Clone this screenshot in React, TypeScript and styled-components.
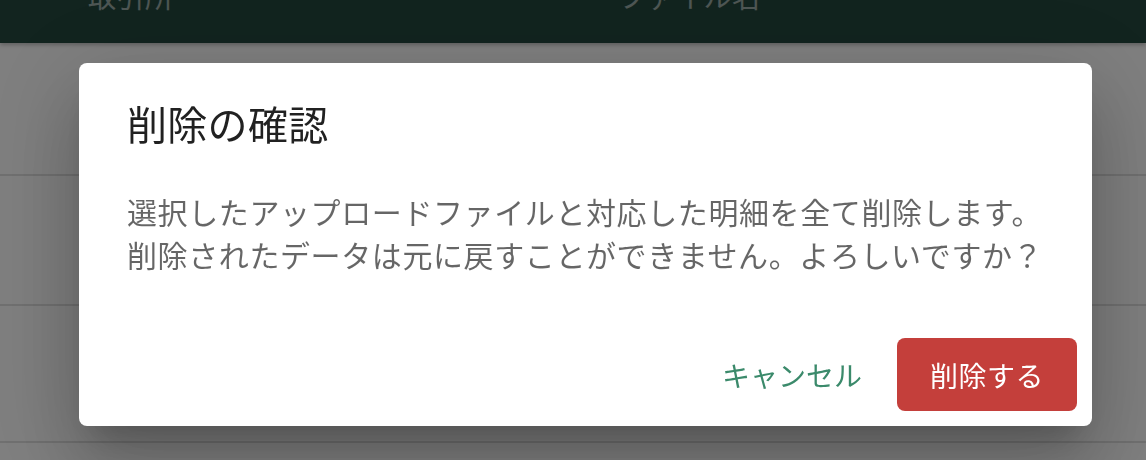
import React from 'react';
import styled, { createGlobalStyle } from 'styled-components';

const GlobalStyle = createGlobalStyle`
  html, body {
    margin: 0;
    padding: 0;
    width: 1146px;
    height: 460px;
    overflow: hidden;
    background: #ffffff;
    font-family: 'Noto Sans CJK JP', 'Noto Sans', sans-serif;
  }
`;

const Page = styled.div`
  width: 1146px;
  height: 460px;
  overflow: hidden;
  background: #ffffff;
`;

const TableHeader = styled.div`
  display: flex;
  height: 43px;
  padding-left: 88px;
  background: #24483e;
  overflow: hidden;
  box-shadow: 0 2px 4px rgba(0, 0, 0, 0.25);
  position: relative;
`;

const HeaderCell = styled.div<{ width: number }>`
  flex: 0 0 ${(p) => p.width}px;
  margin-top: -18px;
  font-size: 28px;
  line-height: 28px;
  color: #ffffff;
  opacity: 0.55;
  letter-spacing: 0.5px;
`;

const Row = styled.div<{ height: number }>`
  height: ${(p) => p.height}px;
  border-bottom: 2px solid #e0e0e0;
  box-sizing: border-box;
`;

const Overlay = styled.div`
  position: fixed;
  inset: 0;
  background: rgba(0, 0, 0, 0.5);
  display: flex;
  align-items: flex-start;
  padding: 63px 0 0 79px;
`;

const Dialog = styled.div`
  width: 1013px;
  background: #ffffff;
  border-radius: 8px;
  display: flex;
  flex-direction: column;
  box-shadow: 0 22px 30px -14px rgba(0, 0, 0, 0.2), 0 48px 76px 6px rgba(0, 0, 0, 0.14),
    0 18px 92px 16px rgba(0, 0, 0, 0.12);
`;

const Title = styled.h2`
  margin: 0;
  padding: 36px 48px 0;
  font-size: 40px;
  line-height: 48px;
  font-weight: 400;
  letter-spacing: 0.3px;
  color: rgba(0, 0, 0, 0.87);
`;

const Content = styled.p`
  margin: 0;
  padding: 43px 48px 0;
  font-size: 30px;
  line-height: 43px;
  letter-spacing: 0.6px;
  color: rgba(0, 0, 0, 0.6);
`;

const Actions = styled.div`
  display: flex;
  justify-content: flex-end;
  align-items: center;
  gap: 2px;
  padding: 62px 15px 15px;
`;

const Button = styled.button<{ variant: 'text' | 'contained' }>`
  height: 73px;
  padding: 0 33px;
  border: none;
  border-radius: 8px;
  font-family: inherit;
  font-size: 28px;
  letter-spacing: ${(p) => (p.variant === 'contained' ? '0.5px' : '0')};
  cursor: pointer;
  background: ${(p) => (p.variant === 'contained' ? '#c43f3b' : 'transparent')};
  color: ${(p) => (p.variant === 'contained' ? '#ffffff' : '#3b8a6b')};
`;

const rows = [133, 130, 137, 130];

export default function App() {
  return (
    <Page>
      <GlobalStyle />
      <TableHeader>
        <HeaderCell width={530}>取引所</HeaderCell>
        <HeaderCell width={400}>ファイル名</HeaderCell>
      </TableHeader>
      {rows.map((h, i) => (
        <Row key={i} height={h} />
      ))}
      <Overlay>
        <Dialog role="dialog">
          <Title>削除の確認</Title>
          <Content>
            選択したアップロードファイルと対応した明細を全て削除します。
            <br />
            削除されたデータは元に戻すことができません。よろしいですか？
          </Content>
          <Actions>
            <Button variant="text">キャンセル</Button>
            <Button variant="contained">削除する</Button>
          </Actions>
        </Dialog>
      </Overlay>
    </Page>
  );
}
